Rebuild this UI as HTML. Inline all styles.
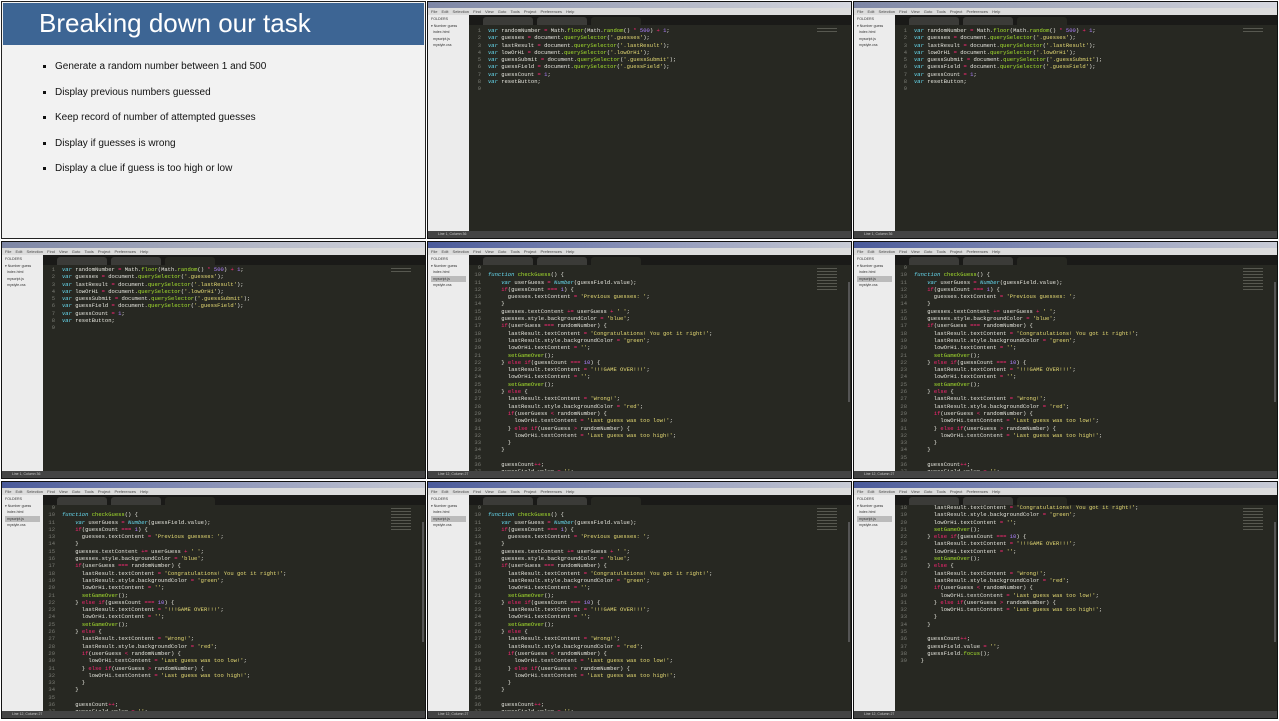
<!DOCTYPE html>
<html><head><meta charset="utf-8"><style>
*{margin:0;padding:0;box-sizing:border-box}
body{width:1279px;height:721px;background:#fff;position:relative;overflow:hidden;font-family:"Liberation Sans",sans-serif}
.cell{position:absolute;width:425px;height:238px;overflow:hidden;background:#272822;border:1px solid #111}
.slide{background:#f2f2f2;border:1px solid #222}
.slide .hd{position:absolute;left:1px;top:1px;right:1px;height:42px;background:#3d6594;color:#fff;font-size:26px;padding-left:36px;line-height:41px}
.slide ul{position:absolute;left:40px;top:58px;list-style:none}
.slide li{font-size:10px;color:#111;height:25.5px;line-height:14px;position:relative;padding-left:13px}
.slide li:before{content:"";position:absolute;left:1px;top:5px;width:3px;height:3px;background:#111}
.tb{position:absolute;left:0;top:0;right:0;height:6px;background:linear-gradient(90deg,#4a5a9a,#8b93b8 50%,#c9ccd6)}
.tb.g{background:linear-gradient(90deg,#7d86a5,#b5b9c8 60%,#d6d8e0)}
.mb{position:absolute;left:0;top:6px;right:0;height:7px;background:#dcdcdc;font-size:4px;color:#444;line-height:7px;padding-left:3px;word-spacing:3px}
.sb{position:absolute;left:0;top:13px;width:41px;bottom:7px;background:#ececec;font-size:3.6px;color:#333;line-height:6.5px;padding:1px 3px}
.sb div{white-space:nowrap}
.tabs{position:absolute;left:41px;top:13px;right:0;height:10px;background:#1a1a18}
.tab{position:absolute;top:2px;height:8px;width:50px;background:#3b3b38;border-radius:3px 3px 0 0}
.tab.a{background:#272822}
.st{position:absolute;left:0;right:0;bottom:0;height:7px;background:#444;font-size:3.5px;color:#ccc;line-height:7px;padding-left:10px}
.gut,.code{position:absolute;font-family:"Liberation Mono",monospace;font-size:5.5px;line-height:7.3px;white-space:pre}
.gut{left:41px;width:12px;text-align:right;color:#7a7b74}
.code{left:60px;color:#e4e4dc}
.k{color:#f92672}.v{color:#66d9ef;font-style:italic}.s{color:#e6db74}.f{color:#a6e22e}.n{color:#ae81ff}
.mm{position:absolute;right:14px;top:26px;width:20px;height:22px;background:repeating-linear-gradient(#77786f 0 1px,transparent 1px 3px);opacity:.6}
.scr{position:absolute;right:1px;top:40px;width:2px;height:120px;background:#555}
</style></head><body>

<div class="cell slide" style="left:1px;top:1px">
<div class="hd">Breaking down our task</div>
<ul>
<li>Generate a random number between 1 and 500</li>
<li>Display previous numbers guessed</li>
<li>Keep record of number of attempted guesses</li>
<li>Display if guesses is wrong</li>
<li>Display a clue if guess is too high or low</li>
</ul>
</div>

<div class="cell" style="left:427px;top:1px">
<div class="tb g"></div><div class="mb">File Edit Selection Find View Goto Tools Project Preferences Help</div>
<div class="sb"><div>FOLDERS</div><div>▾ Number guess</div><div>&nbsp;&nbsp;index.html</div><div>&nbsp;&nbsp;myscript.js</div><div>&nbsp;&nbsp;mystyle.css</div></div>
<div class="tabs"><div class="tab" style="left:14px"></div><div class="tab" style="left:68px"></div><div class="tab a" style="left:122px"></div></div>
<pre class="gut" style="top:25px">1
2
3
4
5
6
7
8
9</pre>
<pre class="code" style="top:25px"><span class="v">var</span> randomNumber <span class="k">=</span> Math.<span class="f">floor</span>(Math.<span class="f">random</span>() <span class="k">*</span> <span class="n">500</span>) <span class="k">+</span> <span class="n">1</span>;
<span class="v">var</span> guesses <span class="k">=</span> document.<span class="f">querySelector</span>(<span class="s">'.guesses'</span>);
<span class="v">var</span> lastResult <span class="k">=</span> document.<span class="f">querySelector</span>(<span class="s">'.lastResult'</span>);
<span class="v">var</span> lowOrHi <span class="k">=</span> document.<span class="f">querySelector</span>(<span class="s">'.lowOrHi'</span>);
<span class="v">var</span> guessSubmit <span class="k">=</span> document.<span class="f">querySelector</span>(<span class="s">'.guessSubmit'</span>);
<span class="v">var</span> guessField <span class="k">=</span> document.<span class="f">querySelector</span>(<span class="s">'.guessField'</span>);
<span class="v">var</span> guessCount <span class="k">=</span> <span class="n">1</span>;
<span class="v">var</span> resetButton;</pre>
<div class="mm" style="height:4px"></div>
<div class="st">Line 1, Column 36</div>
</div>

<div class="cell" style="left:853px;top:1px">
<div class="tb g"></div><div class="mb">File Edit Selection Find View Goto Tools Project Preferences Help</div>
<div class="sb"><div>FOLDERS</div><div>▾ Number guess</div><div>&nbsp;&nbsp;index.html</div><div>&nbsp;&nbsp;myscript.js</div><div>&nbsp;&nbsp;mystyle.css</div></div>
<div class="tabs"><div class="tab" style="left:14px"></div><div class="tab" style="left:68px"></div><div class="tab a" style="left:122px"></div></div>
<pre class="gut" style="top:25px">1
2
3
4
5
6
7
8
9</pre>
<pre class="code" style="top:25px"><span class="v">var</span> randomNumber <span class="k">=</span> Math.<span class="f">floor</span>(Math.<span class="f">random</span>() <span class="k">*</span> <span class="n">500</span>) <span class="k">+</span> <span class="n">1</span>;
<span class="v">var</span> guesses <span class="k">=</span> document.<span class="f">querySelector</span>(<span class="s">'.guesses'</span>);
<span class="v">var</span> lastResult <span class="k">=</span> document.<span class="f">querySelector</span>(<span class="s">'.lastResult'</span>);
<span class="v">var</span> lowOrHi <span class="k">=</span> document.<span class="f">querySelector</span>(<span class="s">'.lowOrHi'</span>);
<span class="v">var</span> guessSubmit <span class="k">=</span> document.<span class="f">querySelector</span>(<span class="s">'.guessSubmit'</span>);
<span class="v">var</span> guessField <span class="k">=</span> document.<span class="f">querySelector</span>(<span class="s">'.guessField'</span>);
<span class="v">var</span> guessCount <span class="k">=</span> <span class="n">1</span>;
<span class="v">var</span> resetButton;</pre>
<div class="mm" style="height:4px"></div>
<div class="st">Line 1, Column 36</div>
</div>

<div class="cell" style="left:1px;top:241px">
<div class="tb g"></div><div class="mb">File Edit Selection Find View Goto Tools Project Preferences Help</div>
<div class="sb"><div>FOLDERS</div><div>▾ Number guess</div><div>&nbsp;&nbsp;index.html</div><div>&nbsp;&nbsp;myscript.js</div><div>&nbsp;&nbsp;mystyle.css</div></div>
<div class="tabs"><div class="tab" style="left:14px"></div><div class="tab" style="left:68px"></div><div class="tab a" style="left:122px"></div></div>
<pre class="gut" style="top:24px">1
2
3
4
5
6
7
8
9</pre>
<pre class="code" style="top:24px"><span class="v">var</span> randomNumber <span class="k">=</span> Math.<span class="f">floor</span>(Math.<span class="f">random</span>() <span class="k">*</span> <span class="n">500</span>) <span class="k">+</span> <span class="n">1</span>;
<span class="v">var</span> guesses <span class="k">=</span> document.<span class="f">querySelector</span>(<span class="s">'.guesses'</span>);
<span class="v">var</span> lastResult <span class="k">=</span> document.<span class="f">querySelector</span>(<span class="s">'.lastResult'</span>);
<span class="v">var</span> lowOrHi <span class="k">=</span> document.<span class="f">querySelector</span>(<span class="s">'.lowOrHi'</span>);
<span class="v">var</span> guessSubmit <span class="k">=</span> document.<span class="f">querySelector</span>(<span class="s">'.guessSubmit'</span>);
<span class="v">var</span> guessField <span class="k">=</span> document.<span class="f">querySelector</span>(<span class="s">'.guessField'</span>);
<span class="v">var</span> guessCount <span class="k">=</span> <span class="n">1</span>;
<span class="v">var</span> resetButton;</pre>
<div class="mm" style="height:4px"></div>
<div class="st">Line 1, Column 36</div>
</div>

<div class="cell" style="left:427px;top:241px">
<div class="tb"></div><div class="mb">File Edit Selection Find View Goto Tools Project Preferences Help</div>
<div class="sb"><div>FOLDERS</div><div>▾ Number guess</div><div>&nbsp;&nbsp;index.html</div><div style="background:#bbb">&nbsp;&nbsp;myscript.js</div><div>&nbsp;&nbsp;mystyle.css</div></div>
<div class="tabs"><div class="tab" style="left:14px"></div><div class="tab" style="left:68px"></div><div class="tab a" style="left:122px"></div></div>
<pre class="gut" style="top:22px">9
10
11
12
13
14
15
16
17
18
19
20
21
22
23
24
25
26
27
28
29
30
31
32
33
34
35
36
37</pre>
<pre class="code" style="top:22px">

<span class="v">function</span> <span class="f">checkGuess</span>() {
    <span class="v">var</span> userGuess <span class="k">=</span> <span class="v">Number</span>(guessField.value);
    <span class="k">if</span>(guessCount <span class="k">===</span> <span class="n">1</span>) {
      guesses.textContent <span class="k">=</span> <span class="s">'Previous guesses: '</span>;
    }
    guesses.textContent <span class="k">+=</span> userGuess <span class="k">+</span> <span class="s">' '</span>;
    guesses.style.backgroundColor <span class="k">=</span> <span class="s">'blue'</span>;
    <span class="k">if</span>(userGuess <span class="k">===</span> randomNumber) {
      lastResult.textContent <span class="k">=</span> <span class="s">'Congratulations! You got it right!'</span>;
      lastResult.style.backgroundColor <span class="k">=</span> <span class="s">'green'</span>;
      lowOrHi.textContent <span class="k">=</span> <span class="s">''</span>;
      <span class="f">setGameOver</span>();
    } <span class="k">else if</span>(guessCount <span class="k">===</span> <span class="n">10</span>) {
      lastResult.textContent <span class="k">=</span> <span class="s">'!!!GAME OVER!!!'</span>;
      lowOrHi.textContent <span class="k">=</span> <span class="s">''</span>;
      <span class="f">setGameOver</span>();
    } <span class="k">else</span> {
      lastResult.textContent <span class="k">=</span> <span class="s">'Wrong!'</span>;
      lastResult.style.backgroundColor <span class="k">=</span> <span class="s">'red'</span>;
      <span class="k">if</span>(userGuess <span class="k">&lt;</span> randomNumber) {
        lowOrHi.textContent <span class="k">=</span> <span class="s">'Last guess was too low!'</span>;
      } <span class="k">else if</span>(userGuess <span class="k">&gt;</span> randomNumber) {
        lowOrHi.textContent <span class="k">=</span> <span class="s">'Last guess was too high!'</span>;
      }
    }

    guessCount<span class="k">++</span>;
    guessField.value <span class="k">=</span> <span class="s">''</span>;</pre>
<div class="mm"></div><div class="scr"></div>
<div class="st">Line 12, Column 27</div>
</div>

<div class="cell" style="left:853px;top:241px">
<div class="tb"></div><div class="mb">File Edit Selection Find View Goto Tools Project Preferences Help</div>
<div class="sb"><div>FOLDERS</div><div>▾ Number guess</div><div>&nbsp;&nbsp;index.html</div><div style="background:#bbb">&nbsp;&nbsp;myscript.js</div><div>&nbsp;&nbsp;mystyle.css</div></div>
<div class="tabs"><div class="tab" style="left:14px"></div><div class="tab" style="left:68px"></div><div class="tab a" style="left:122px"></div></div>
<pre class="gut" style="top:22px">9
10
11
12
13
14
15
16
17
18
19
20
21
22
23
24
25
26
27
28
29
30
31
32
33
34
35
36
37</pre>
<pre class="code" style="top:22px">

<span class="v">function</span> <span class="f">checkGuess</span>() {
    <span class="v">var</span> userGuess <span class="k">=</span> <span class="v">Number</span>(guessField.value);
    <span class="k">if</span>(guessCount <span class="k">===</span> <span class="n">1</span>) {
      guesses.textContent <span class="k">=</span> <span class="s">'Previous guesses: '</span>;
    }
    guesses.textContent <span class="k">+=</span> userGuess <span class="k">+</span> <span class="s">' '</span>;
    guesses.style.backgroundColor <span class="k">=</span> <span class="s">'blue'</span>;
    <span class="k">if</span>(userGuess <span class="k">===</span> randomNumber) {
      lastResult.textContent <span class="k">=</span> <span class="s">'Congratulations! You got it right!'</span>;
      lastResult.style.backgroundColor <span class="k">=</span> <span class="s">'green'</span>;
      lowOrHi.textContent <span class="k">=</span> <span class="s">''</span>;
      <span class="f">setGameOver</span>();
    } <span class="k">else if</span>(guessCount <span class="k">===</span> <span class="n">10</span>) {
      lastResult.textContent <span class="k">=</span> <span class="s">'!!!GAME OVER!!!'</span>;
      lowOrHi.textContent <span class="k">=</span> <span class="s">''</span>;
      <span class="f">setGameOver</span>();
    } <span class="k">else</span> {
      lastResult.textContent <span class="k">=</span> <span class="s">'Wrong!'</span>;
      lastResult.style.backgroundColor <span class="k">=</span> <span class="s">'red'</span>;
      <span class="k">if</span>(userGuess <span class="k">&lt;</span> randomNumber) {
        lowOrHi.textContent <span class="k">=</span> <span class="s">'Last guess was too low!'</span>;
      } <span class="k">else if</span>(userGuess <span class="k">&gt;</span> randomNumber) {
        lowOrHi.textContent <span class="k">=</span> <span class="s">'Last guess was too high!'</span>;
      }
    }

    guessCount<span class="k">++</span>;
    guessField.value <span class="k">=</span> <span class="s">''</span>;</pre>
<div class="mm"></div><div class="scr"></div>
<div class="st">Line 12, Column 27</div>
</div>

<div class="cell" style="left:1px;top:481px">
<div class="tb"></div><div class="mb">File Edit Selection Find View Goto Tools Project Preferences Help</div>
<div class="sb"><div>FOLDERS</div><div>▾ Number guess</div><div>&nbsp;&nbsp;index.html</div><div style="background:#bbb">&nbsp;&nbsp;myscript.js</div><div>&nbsp;&nbsp;mystyle.css</div></div>
<div class="tabs"><div class="tab" style="left:14px"></div><div class="tab" style="left:68px"></div><div class="tab a" style="left:122px"></div></div>
<pre class="gut" style="top:22px">9
10
11
12
13
14
15
16
17
18
19
20
21
22
23
24
25
26
27
28
29
30
31
32
33
34
35
36
37</pre>
<pre class="code" style="top:22px">

<span class="v">function</span> <span class="f">checkGuess</span>() {
    <span class="v">var</span> userGuess <span class="k">=</span> <span class="v">Number</span>(guessField.value);
    <span class="k">if</span>(guessCount <span class="k">===</span> <span class="n">1</span>) {
      guesses.textContent <span class="k">=</span> <span class="s">'Previous guesses: '</span>;
    }
    guesses.textContent <span class="k">+=</span> userGuess <span class="k">+</span> <span class="s">' '</span>;
    guesses.style.backgroundColor <span class="k">=</span> <span class="s">'blue'</span>;
    <span class="k">if</span>(userGuess <span class="k">===</span> randomNumber) {
      lastResult.textContent <span class="k">=</span> <span class="s">'Congratulations! You got it right!'</span>;
      lastResult.style.backgroundColor <span class="k">=</span> <span class="s">'green'</span>;
      lowOrHi.textContent <span class="k">=</span> <span class="s">''</span>;
      <span class="f">setGameOver</span>();
    } <span class="k">else if</span>(guessCount <span class="k">===</span> <span class="n">10</span>) {
      lastResult.textContent <span class="k">=</span> <span class="s">'!!!GAME OVER!!!'</span>;
      lowOrHi.textContent <span class="k">=</span> <span class="s">''</span>;
      <span class="f">setGameOver</span>();
    } <span class="k">else</span> {
      lastResult.textContent <span class="k">=</span> <span class="s">'Wrong!'</span>;
      lastResult.style.backgroundColor <span class="k">=</span> <span class="s">'red'</span>;
      <span class="k">if</span>(userGuess <span class="k">&lt;</span> randomNumber) {
        lowOrHi.textContent <span class="k">=</span> <span class="s">'Last guess was too low!'</span>;
      } <span class="k">else if</span>(userGuess <span class="k">&gt;</span> randomNumber) {
        lowOrHi.textContent <span class="k">=</span> <span class="s">'Last guess was too high!'</span>;
      }
    }

    guessCount<span class="k">++</span>;
    guessField.value <span class="k">=</span> <span class="s">''</span>;</pre>
<div class="mm"></div><div class="scr"></div>
<div class="st">Line 12, Column 27</div>
</div>

<div class="cell" style="left:427px;top:481px">
<div class="tb"></div><div class="mb">File Edit Selection Find View Goto Tools Project Preferences Help</div>
<div class="sb"><div>FOLDERS</div><div>▾ Number guess</div><div>&nbsp;&nbsp;index.html</div><div style="background:#bbb">&nbsp;&nbsp;myscript.js</div><div>&nbsp;&nbsp;mystyle.css</div></div>
<div class="tabs"><div class="tab" style="left:14px"></div><div class="tab" style="left:68px"></div><div class="tab a" style="left:122px"></div></div>
<pre class="gut" style="top:22px">9
10
11
12
13
14
15
16
17
18
19
20
21
22
23
24
25
26
27
28
29
30
31
32
33
34
35
36
37</pre>
<pre class="code" style="top:22px">

<span class="v">function</span> <span class="f">checkGuess</span>() {
    <span class="v">var</span> userGuess <span class="k">=</span> <span class="v">Number</span>(guessField.value);
    <span class="k">if</span>(guessCount <span class="k">===</span> <span class="n">1</span>) {
      guesses.textContent <span class="k">=</span> <span class="s">'Previous guesses: '</span>;
    }
    guesses.textContent <span class="k">+=</span> userGuess <span class="k">+</span> <span class="s">' '</span>;
    guesses.style.backgroundColor <span class="k">=</span> <span class="s">'blue'</span>;
    <span class="k">if</span>(userGuess <span class="k">===</span> randomNumber) {
      lastResult.textContent <span class="k">=</span> <span class="s">'Congratulations! You got it right!'</span>;
      lastResult.style.backgroundColor <span class="k">=</span> <span class="s">'green'</span>;
      lowOrHi.textContent <span class="k">=</span> <span class="s">''</span>;
      <span class="f">setGameOver</span>();
    } <span class="k">else if</span>(guessCount <span class="k">===</span> <span class="n">10</span>) {
      lastResult.textContent <span class="k">=</span> <span class="s">'!!!GAME OVER!!!'</span>;
      lowOrHi.textContent <span class="k">=</span> <span class="s">''</span>;
      <span class="f">setGameOver</span>();
    } <span class="k">else</span> {
      lastResult.textContent <span class="k">=</span> <span class="s">'Wrong!'</span>;
      lastResult.style.backgroundColor <span class="k">=</span> <span class="s">'red'</span>;
      <span class="k">if</span>(userGuess <span class="k">&lt;</span> randomNumber) {
        lowOrHi.textContent <span class="k">=</span> <span class="s">'Last guess was too low!'</span>;
      } <span class="k">else if</span>(userGuess <span class="k">&gt;</span> randomNumber) {
        lowOrHi.textContent <span class="k">=</span> <span class="s">'Last guess was too high!'</span>;
      }
    }

    guessCount<span class="k">++</span>;
    guessField.value <span class="k">=</span> <span class="s">''</span>;</pre>
<div class="mm"></div><div class="scr"></div>
<div class="st">Line 12, Column 27</div>
</div>

<div class="cell" style="left:853px;top:481px">
<div class="tb"></div><div class="mb">File Edit Selection Find View Goto Tools Project Preferences Help</div>
<div class="sb"><div>FOLDERS</div><div>▾ Number guess</div><div>&nbsp;&nbsp;index.html</div><div style="background:#bbb">&nbsp;&nbsp;myscript.js</div><div>&nbsp;&nbsp;mystyle.css</div></div>
<div class="tabs"><div class="tab" style="left:14px"></div><div class="tab" style="left:68px"></div><div class="tab a" style="left:122px"></div></div>
<pre class="gut" style="top:22px">18
19
20
21
22
23
24
25
26
27
28
29
30
31
32
33
34
35
36
37
38
39</pre>
<pre class="code" style="top:22px">      lastResult.textContent <span class="k">=</span> <span class="s">'Congratulations! You got it right!'</span>;
      lastResult.style.backgroundColor <span class="k">=</span> <span class="s">'green'</span>;
      lowOrHi.textContent <span class="k">=</span> <span class="s">''</span>;
      <span class="f">setGameOver</span>();
    } <span class="k">else if</span>(guessCount <span class="k">===</span> <span class="n">10</span>) {
      lastResult.textContent <span class="k">=</span> <span class="s">'!!!GAME OVER!!!'</span>;
      lowOrHi.textContent <span class="k">=</span> <span class="s">''</span>;
      <span class="f">setGameOver</span>();
    } <span class="k">else</span> {
      lastResult.textContent <span class="k">=</span> <span class="s">'Wrong!'</span>;
      lastResult.style.backgroundColor <span class="k">=</span> <span class="s">'red'</span>;
      <span class="k">if</span>(userGuess <span class="k">&lt;</span> randomNumber) {
        lowOrHi.textContent <span class="k">=</span> <span class="s">'Last guess was too low!'</span>;
      } <span class="k">else if</span>(userGuess <span class="k">&gt;</span> randomNumber) {
        lowOrHi.textContent <span class="k">=</span> <span class="s">'Last guess was too high!'</span>;
      }
    }

    guessCount<span class="k">++</span>;
    guessField.value <span class="k">=</span> <span class="s">''</span>;
    guessField.<span class="f">focus</span>();
  }</pre>
<div class="mm"></div><div class="scr"></div>
<div class="st">Line 12, Column 27</div>
</div>

</body></html>
